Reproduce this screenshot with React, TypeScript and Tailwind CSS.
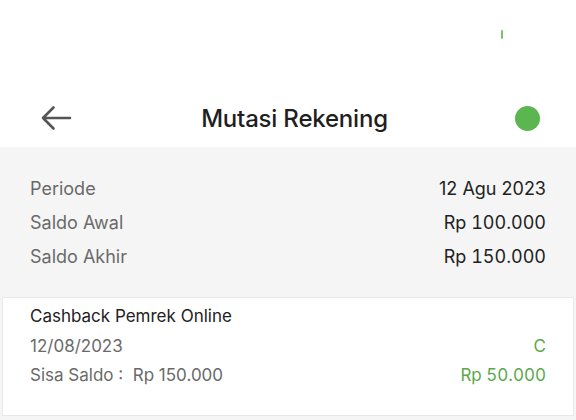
import React from "react";

export default function App() {
  const font = { fontFamily: "Inter, 'Noto Sans', sans-serif" };
  return (
    <div className="w-[576px] h-[420px] bg-[#f5f5f5] overflow-hidden" style={font}>
      <div className="bg-white h-[147px] flex flex-col">
        <div className="h-[88px] relative">
          <div className="absolute left-[501px] top-[30px] w-[2px] h-[9px] bg-[#7cc46a] rounded-full" />
        </div>
        <div className="h-[59px] flex items-center justify-between pl-[40px] pr-[36px]">
          <svg width="32" height="28" viewBox="0 0 32 28">
            <path d="M3 14 H30 M3 14 L13.5 3.5 M3 14 L13.5 24.5" stroke="#555" strokeWidth="2.6" fill="none" strokeLinecap="round" strokeLinejoin="round" />
          </svg>
          <div className="text-[24px] font-medium text-[#1f1f1f] tracking-[-0.2px] ml-[2px] mt-[2px]">Mutasi Rekening</div>
          <div className="w-[25px] h-[25px] rounded-full bg-[#5cb64f] mt-[2px]" />
        </div>
      </div>
      <div className="pt-[24px] pb-[24px] px-[30px] text-[18px]">
        <div className="h-[34px] flex items-center justify-between">
          <span className="text-[#6a6a6a]">Periode</span>
          <span className="text-[#222]">12 Agu 2023</span>
        </div>
        <div className="h-[34px] flex items-center justify-between">
          <span className="text-[#6a6a6a]">Saldo Awal</span>
          <span className="text-[#222] tabular-nums">Rp 100.000</span>
        </div>
        <div className="h-[34px] flex items-center justify-between">
          <span className="text-[#6a6a6a]">Saldo Akhir</span>
          <span className="text-[#222] tabular-nums">Rp 150.000</span>
        </div>
      </div>
      <div className="mx-[2px] bg-white border border-[#e8e8e8] pt-[4px] pb-[24px] pl-[27px] pr-[27px] text-[17px]">
        <div className="h-[30px] flex items-center text-[#222]">Cashback Pemrek Online</div>
        <div className="h-[29px] flex items-center justify-between">
          <span className="text-[#6a6a6a]">12/08/2023</span>
          <span className="text-[#5aa84a]">C</span>
        </div>
        <div className="h-[30px] flex items-center justify-between">
          <span className="text-[#6a6a6a]">Sisa Saldo :&nbsp; Rp 150.000</span>
          <span className="text-[#5aa84a] tabular-nums">Rp 50.000</span>
        </div>
      </div>
    </div>
  );
}
